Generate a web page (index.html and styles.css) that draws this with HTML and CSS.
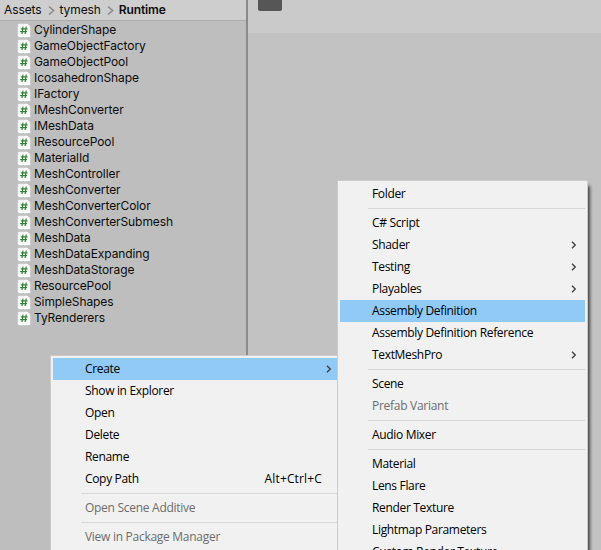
FILE: index.html
```
<!DOCTYPE html>
<html lang="en">
<head>
<meta charset="utf-8">
<title>Project</title>
<link rel="stylesheet" href="styles.css">
</head>
<body>
<svg class="defs" width="0" height="0">
  <symbol id="script" viewBox="0 0 14 15"><path d="M2 .5H10.4L13.5 3.6V13Q13.5 14.5 12 14.5H2Q.6 14.5 .6 13V2Q.6.5 2 .5Z" fill="#fdfdfd" stroke="#b0b0b0" stroke-width=".4"/><path d="M6 3.5 5 11M9.2 3.5 8.2 11M3.8 5.8H10.6M3.2 8.7H10" fill="none" stroke="#2c8535" stroke-width="1.2"/></symbol>
  <symbol id="chev" viewBox="0 0 6 8"><path d="M1 .7 4.3 4 1 7.3" fill="none" stroke="#3c3c3c" stroke-width="1.3"/></symbol>
  <symbol id="crumb" viewBox="0 0 7 10"><path d="M1 1.5 5.6 5.5 1 9.5" fill="none" stroke="#8b8b8b" stroke-width="1.6"/></symbol>
</svg>
<div class="app">
  <aside class="project">
    <nav class="path"><span>Assets</span><svg><use href="#crumb"/></svg><span>tymesh</span><svg><use href="#crumb"/></svg><b>Runtime</b></nav>
    <ul class="files">
      <li><svg><use href="#script"/></svg>CylinderShape</li>
      <li><svg><use href="#script"/></svg>GameObjectFactory</li>
      <li><svg><use href="#script"/></svg>GameObjectPool</li>
      <li><svg><use href="#script"/></svg>IcosahedronShape</li>
      <li><svg><use href="#script"/></svg>IFactory</li>
      <li><svg><use href="#script"/></svg>IMeshConverter</li>
      <li><svg><use href="#script"/></svg>IMeshData</li>
      <li><svg><use href="#script"/></svg>IResourcePool</li>
      <li><svg><use href="#script"/></svg>MaterialId</li>
      <li><svg><use href="#script"/></svg>MeshController</li>
      <li><svg><use href="#script"/></svg>MeshConverter</li>
      <li><svg><use href="#script"/></svg>MeshConverterColor</li>
      <li><svg><use href="#script"/></svg>MeshConverterSubmesh</li>
      <li><svg><use href="#script"/></svg>MeshData</li>
      <li><svg><use href="#script"/></svg>MeshDataExpanding</li>
      <li><svg><use href="#script"/></svg>MeshDataStorage</li>
      <li><svg><use href="#script"/></svg>ResourcePool</li>
      <li><svg><use href="#script"/></svg>SimpleShapes</li>
      <li><svg><use href="#script"/></svg>TyRenderers</li>
    </ul>
  </aside>
  <main class="view"><div class="toolbar"><div class="tab"></div></div></main>
  <div class="menu context">
    <div class="item active"><span>Create</span><svg><use href="#chev"/></svg></div>
    <div class="item"><span>Show in Explorer</span></div>
    <div class="item"><span>Open</span></div>
    <div class="item"><span>Delete</span></div>
    <div class="item"><span>Rename</span></div>
    <div class="item"><span>Copy Path</span><kbd>Alt+Ctrl+C</kbd></div>
    <hr>
    <div class="item disabled"><span>Open Scene Additive</span></div>
    <hr>
    <div class="item disabled"><span>View in Package Manager</span></div>
  </div>
  <div class="menu create">
    <div class="item"><span>Folder</span></div>
    <hr>
    <div class="item"><span>C# Script</span></div>
    <div class="item"><span>Shader</span><svg><use href="#chev"/></svg></div>
    <div class="item"><span>Testing</span><svg><use href="#chev"/></svg></div>
    <div class="item"><span>Playables</span><svg><use href="#chev"/></svg></div>
    <div class="item active"><span>Assembly Definition</span></div>
    <div class="item"><span>Assembly Definition Reference</span></div>
    <div class="item"><span>TextMeshPro</span><svg><use href="#chev"/></svg></div>
    <hr>
    <div class="item"><span>Scene</span></div>
    <div class="item disabled"><span>Prefab Variant</span></div>
    <hr>
    <div class="item"><span>Audio Mixer</span></div>
    <hr>
    <div class="item"><span>Material</span></div>
    <div class="item"><span>Lens Flare</span></div>
    <div class="item"><span>Render Texture</span></div>
    <div class="item"><span>Lightmap Parameters</span></div>
    <div class="item"><span>Custom Render Texture</span></div>
  </div>
</div>
</body>
</html>
```
FILE: styles.css
```
* { box-sizing: border-box; }
body { margin: 0; overflow: hidden; }
.defs { position: absolute; }
.app {
  position: relative;
  display: flex;
  width: 601px;
  height: 550px;
  overflow: hidden;
  background: #c2c2c2;
}
.project {
  width: 248px;
  border-right: 2px solid #8a8a8a;
  background: #bebebe;
  font: 12px/16px Inter, sans-serif;
  letter-spacing: -0.09px;
  color: #0c0c0c;
}
.path {
  display: flex;
  align-items: center;
  height: 21px;
  padding-left: 4px;
  border-bottom: 1px solid #acacac;
  background: #cecece;
}
.path svg { width: 7px; height: 10px; margin: 0 5px 0 6px; }
.path b { font-weight: 600; letter-spacing: -0.15px; }
.files { margin: 0; padding: 1px 0 0 17px; list-style: none; }
.files li { display: flex; align-items: center; height: 16px; white-space: nowrap; }
.files svg { width: 14px; height: 15px; margin-right: 3px; }
.view { flex: 1; }
.toolbar { height: 33px; padding-left: 10px; background: #cacaca; }
.tab { width: 24px; height: 11px; border-radius: 0 0 2px 2px; background: #565656; }
.menu {
  position: absolute;
  border: 1px solid #cccccc;
  padding: 2px;
  background: #f1f1f1;
  font: 12px/22px "Open Sans", sans-serif;
  letter-spacing: -0.33px;
  color: #000;
}
.context { left: 50px; top: 355px; width: 300px; height: 220px; }
.create { left: 337px; top: 180px; width: 251px; height: 390px; box-shadow: 4px 4px 3px -2px rgba(0, 0, 0, .65); }
.item { display: flex; align-items: center; height: 22px; padding-left: 32px; white-space: nowrap; }
.item svg { width: 6px; height: 8px; margin-left: auto; margin-right: 8px; }
.context .item svg { margin-right: 15px; }
.item kbd { margin-left: auto; margin-right: 25px; font: inherit; letter-spacing: .15px; }
.active { background: #91c9f7; }
.disabled { color: #6d6d6d; letter-spacing: -0.28px; }
.menu hr { height: 1px; margin: 3px 0 3px 28px; border: 0; background: #d7d7d7; }
```
